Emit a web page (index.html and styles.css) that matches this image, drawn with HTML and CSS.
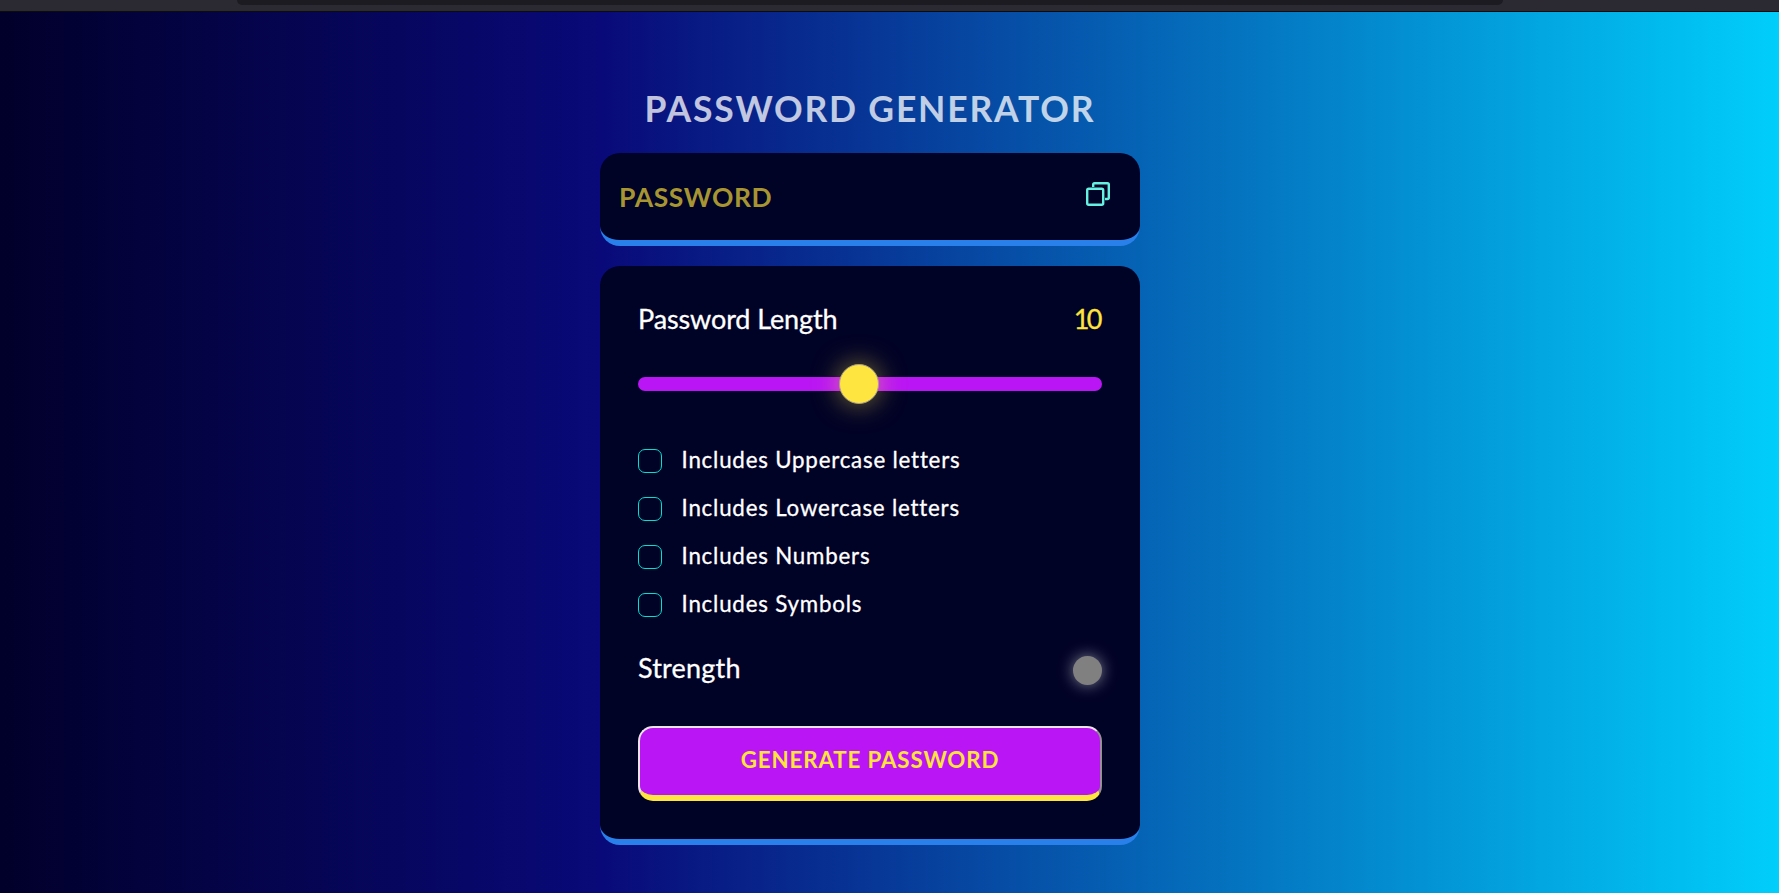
FILE: index.html
```html
<!DOCTYPE html>
<html lang="en">
<head>
<meta charset="utf-8">
<title>Password Generator</title>
<link rel="stylesheet" href="styles.css">
</head>
<body>
<div class="toolbar"><div class="address"></div></div>
<main class="page">
  <div class="container">
    <h1 class="title"><span>PASSWORD GENERATOR</span></h1>
    <div class="display">
      <span class="placeholder">PASSWORD</span>
      <button class="copy" aria-label="Copy">
        <svg width="24" height="24" viewBox="0 0 24 24" fill="none" stroke="currentColor" stroke-width="2.400">
          <rect x="1.200" y="6.800" width="16" height="16" rx="1.500"/>
          <path d="M7.200 5V2.500Q7.200 1.200 8.500 1.200H21.500Q22.800 1.200 22.800 2.500V15.500Q22.800 17 21.500 17H19"/>
        </svg>
      </button>
    </div>
    <section class="panel">
      <div class="row length"><span class="length-label">Password Length</span><span class="count">10</span></div>
      <div class="slider"><div class="thumb"></div></div>
      <div class="options">
        <label class="option"><i class="box"></i><span>Includes Uppercase letters</span></label>
        <label class="option"><i class="box"></i><span>Includes Lowercase letters</span></label>
        <label class="option"><i class="box"></i><span>Includes Numbers</span></label>
        <label class="option"><i class="box"></i><span>Includes Symbols</span></label>
      </div>
      <div class="row strength"><span class="strength-label">Strength</span><i class="indicator"></i></div>
      <button class="generate"><span>GENERATE PASSWORD</span></button>
    </section>
  </div>
</main>
</body>
</html>
```
FILE: styles.css
```css
* { box-sizing: border-box; margin: 0; padding: 0; }
body {
  height: 893px;
  overflow: hidden;
  display: flex;
  flex-direction: column;
  font-family: Lato, "Liberation Sans", sans-serif;
  color: #fff;
}
.toolbar { height: 12px; flex: none; background: #2b2a33; border-bottom: 1px solid #0c0c0d; }
.address { height: 5px; margin: 0 276px 0 237px; background: #1c1b22; border-radius: 0 0 5px 5px; }
.page {
  flex: 1;
  display: flex;
  justify-content: center;
  padding: 75px 39px 0 0;
  background: linear-gradient(90deg, #01002a 0, #090979 600px, #00d4ff 1815px);
}
.container { width: 540px; }
.title {
  height: 66px;
  line-height: 43px;
  font-size: 35.5px;
  font-weight: 700;
  letter-spacing: 1.8px;
  text-align: center;
  color: rgba(255, 255, 255, .75);
  white-space: nowrap;
}
.display {
  height: 93px;
  padding: 0 30px 0 19px;
  display: flex;
  justify-content: space-between;
  background: #000226;
  border-bottom: 6px solid #2a80ea;
  border-radius: 20px;
}
.placeholder { padding-top: 28px; line-height: 32px; font-size: 26.5px; font-weight: 700; letter-spacing: .6px; color: #a79531; }
.copy { height: 24px; margin-top: 29px; background: none; border: 0; color: #66f0e2; }
.copy svg { display: block; }
.panel {
  height: 579px;
  margin-top: 20px;
  padding: 35px 38px 0;
  background: #000226;
  border-bottom: 6px solid #2a80ea;
  border-radius: 20px;
}
.row { display: flex; justify-content: space-between; height: 34px; line-height: 36px; font-size: 27px; white-space: nowrap; -webkit-text-stroke: .3px; }
.length-label { letter-spacing: -.12px; }
.strength-label { letter-spacing: .2px; }
.count { color: #ffe53b; letter-spacing: -2.500px; padding-right: 2px; }
.slider {
  height: 14px;
  margin-top: 42px;
  padding-left: 201px;
  display: flex;
  align-items: center;
  background: #ba15f4;
  border-radius: 7px;
}
.thumb {
  flex: none;
  width: 40px;
  height: 40px;
  border: 1px solid #aaa08c;
  border-radius: 50%;
  background: #ffe53f;
  box-shadow: 0 0 27px rgba(255, 229, 63, .5);
}
.options { display: grid; gap: 24px; margin-top: 58px; }
.option { height: 24px; display: flex; gap: 19.500px; line-height: 22px; font-size: 22.3px; letter-spacing: .8px; white-space: nowrap; -webkit-text-stroke: .3px; }
.box { width: 24px; height: 24px; border: 1px solid #00e0ce; border-radius: 7px; }
.strength { margin-top: 33px; }
.indicator { width: 29px; height: 29px; margin-top: 6px; border-radius: 50%; background: #808080; box-shadow: 0 0 15px rgba(255, 255, 255, .5); }
.generate {
  display: block;
  width: 464px;
  height: 75px;
  margin-top: 42px;
  padding-bottom: 5px;
  font: 700 22.3px Lato, "Liberation Sans", sans-serif;
  letter-spacing: .87px;
  color: #ffe53b;
  background: #ba15f4;
  border: 2px solid #e8e4e8;
  border-right-color: #949094;
  border-bottom: 6px solid #ffe53f;
  border-radius: 15px;
}
```
